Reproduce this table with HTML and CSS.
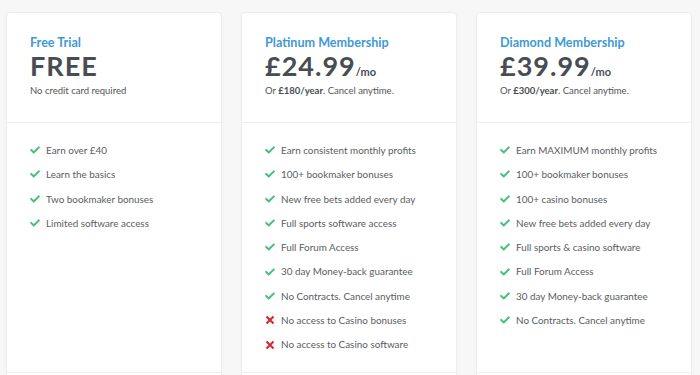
FILE: index.html
```html
<!DOCTYPE html>
<html lang="en">
<head>
  <meta charset="UTF-8">
  <meta name="viewport" content="width=device-width, initial-scale=1.0">
  <title>Membership Plans</title>
  <link rel="stylesheet" href="styles.css">
</head>
<body>
  <div class="pricing">
    <div class="plan-card">
      <div class="plan-header">
        <div class="plan-name">Free Trial</div>
        <div class="plan-price">FREE</div>
        <div class="plan-note">No credit card required</div>
      </div>
      <ul class="plan-features">
        <li><svg class="icon yes" viewBox="0 0 512 512"><path d="M173.9 439.4l-166.4-166.4c-10-10-10-26.2 0-36.2l36.2-36.2c10-10 26.2-10 36.2 0L192 312.7 432.1 72.6c10-10 26.2-10 36.2 0l36.2 36.2c10 10 10 26.2 0 36.2l-294.4 294.4c-10 10-26.2 10-36.2 0z"/></svg>Earn over £40</li>
        <li><svg class="icon yes" viewBox="0 0 512 512"><path d="M173.9 439.4l-166.4-166.4c-10-10-10-26.2 0-36.2l36.2-36.2c10-10 26.2-10 36.2 0L192 312.7 432.1 72.6c10-10 26.2-10 36.2 0l36.2 36.2c10 10 10 26.2 0 36.2l-294.4 294.4c-10 10-26.2 10-36.2 0z"/></svg>Learn the basics</li>
        <li><svg class="icon yes" viewBox="0 0 512 512"><path d="M173.9 439.4l-166.4-166.4c-10-10-10-26.2 0-36.2l36.2-36.2c10-10 26.2-10 36.2 0L192 312.7 432.1 72.6c10-10 26.2-10 36.2 0l36.2 36.2c10 10 10 26.2 0 36.2l-294.4 294.4c-10 10-26.2 10-36.2 0z"/></svg>Two bookmaker bonuses</li>
        <li><svg class="icon yes" viewBox="0 0 512 512"><path d="M173.9 439.4l-166.4-166.4c-10-10-10-26.2 0-36.2l36.2-36.2c10-10 26.2-10 36.2 0L192 312.7 432.1 72.6c10-10 26.2-10 36.2 0l36.2 36.2c10 10 10 26.2 0 36.2l-294.4 294.4c-10 10-26.2 10-36.2 0z"/></svg>Limited software access</li>
      </ul>
      <div class="plan-footer"></div>
    </div>

    <div class="plan-card">
      <div class="plan-header">
        <div class="plan-name">Platinum Membership</div>
        <div class="plan-price">£24.99<span class="per">/mo</span></div>
        <div class="plan-note">Or <strong>£180/year</strong>. Cancel anytime.</div>
      </div>
      <ul class="plan-features">
        <li><svg class="icon yes" viewBox="0 0 512 512"><path d="M173.9 439.4l-166.4-166.4c-10-10-10-26.2 0-36.2l36.2-36.2c10-10 26.2-10 36.2 0L192 312.7 432.1 72.6c10-10 26.2-10 36.2 0l36.2 36.2c10 10 10 26.2 0 36.2l-294.4 294.4c-10 10-26.2 10-36.2 0z"/></svg>Earn consistent monthly profits</li>
        <li><svg class="icon yes" viewBox="0 0 512 512"><path d="M173.9 439.4l-166.4-166.4c-10-10-10-26.2 0-36.2l36.2-36.2c10-10 26.2-10 36.2 0L192 312.7 432.1 72.6c10-10 26.2-10 36.2 0l36.2 36.2c10 10 10 26.2 0 36.2l-294.4 294.4c-10 10-26.2 10-36.2 0z"/></svg>100+ bookmaker bonuses</li>
        <li><svg class="icon yes" viewBox="0 0 512 512"><path d="M173.9 439.4l-166.4-166.4c-10-10-10-26.2 0-36.2l36.2-36.2c10-10 26.2-10 36.2 0L192 312.7 432.1 72.6c10-10 26.2-10 36.2 0l36.2 36.2c10 10 10 26.2 0 36.2l-294.4 294.4c-10 10-26.2 10-36.2 0z"/></svg>New free bets added every day</li>
        <li><svg class="icon yes" viewBox="0 0 512 512"><path d="M173.9 439.4l-166.4-166.4c-10-10-10-26.2 0-36.2l36.2-36.2c10-10 26.2-10 36.2 0L192 312.7 432.1 72.6c10-10 26.2-10 36.2 0l36.2 36.2c10 10 10 26.2 0 36.2l-294.4 294.4c-10 10-26.2 10-36.2 0z"/></svg>Full sports software access</li>
        <li><svg class="icon yes" viewBox="0 0 512 512"><path d="M173.9 439.4l-166.4-166.4c-10-10-10-26.2 0-36.2l36.2-36.2c10-10 26.2-10 36.2 0L192 312.7 432.1 72.6c10-10 26.2-10 36.2 0l36.2 36.2c10 10 10 26.2 0 36.2l-294.4 294.4c-10 10-26.2 10-36.2 0z"/></svg>Full Forum Access</li>
        <li><svg class="icon yes" viewBox="0 0 512 512"><path d="M173.9 439.4l-166.4-166.4c-10-10-10-26.2 0-36.2l36.2-36.2c10-10 26.2-10 36.2 0L192 312.7 432.1 72.6c10-10 26.2-10 36.2 0l36.2 36.2c10 10 10 26.2 0 36.2l-294.4 294.4c-10 10-26.2 10-36.2 0z"/></svg>30 day Money-back guarantee</li>
        <li><svg class="icon yes" viewBox="0 0 512 512"><path d="M173.9 439.4l-166.4-166.4c-10-10-10-26.2 0-36.2l36.2-36.2c10-10 26.2-10 36.2 0L192 312.7 432.1 72.6c10-10 26.2-10 36.2 0l36.2 36.2c10 10 10 26.2 0 36.2l-294.4 294.4c-10 10-26.2 10-36.2 0z"/></svg>No Contracts. Cancel anytime</li>
        <li><svg class="icon no" viewBox="0 0 10 10"><path d="M1.5 1.5l7 7M8.5 1.5l-7 7"/></svg>No access to Casino bonuses</li>
        <li><svg class="icon no" viewBox="0 0 10 10"><path d="M1.5 1.5l7 7M8.5 1.5l-7 7"/></svg>No access to Casino software</li>
      </ul>
      <div class="plan-footer"></div>
    </div>

    <div class="plan-card">
      <div class="plan-header">
        <div class="plan-name">Diamond Membership</div>
        <div class="plan-price">£39.99<span class="per">/mo</span></div>
        <div class="plan-note">Or <strong>£300/year</strong>. Cancel anytime.</div>
      </div>
      <ul class="plan-features">
        <li><svg class="icon yes" viewBox="0 0 512 512"><path d="M173.9 439.4l-166.4-166.4c-10-10-10-26.2 0-36.2l36.2-36.2c10-10 26.2-10 36.2 0L192 312.7 432.1 72.6c10-10 26.2-10 36.2 0l36.2 36.2c10 10 10 26.2 0 36.2l-294.4 294.4c-10 10-26.2 10-36.2 0z"/></svg>Earn MAXIMUM monthly profits</li>
        <li><svg class="icon yes" viewBox="0 0 512 512"><path d="M173.9 439.4l-166.4-166.4c-10-10-10-26.2 0-36.2l36.2-36.2c10-10 26.2-10 36.2 0L192 312.7 432.1 72.6c10-10 26.2-10 36.2 0l36.2 36.2c10 10 10 26.2 0 36.2l-294.4 294.4c-10 10-26.2 10-36.2 0z"/></svg>100+ bookmaker bonuses</li>
        <li><svg class="icon yes" viewBox="0 0 512 512"><path d="M173.9 439.4l-166.4-166.4c-10-10-10-26.2 0-36.2l36.2-36.2c10-10 26.2-10 36.2 0L192 312.7 432.1 72.6c10-10 26.2-10 36.2 0l36.2 36.2c10 10 10 26.2 0 36.2l-294.4 294.4c-10 10-26.2 10-36.2 0z"/></svg>100+ casino bonuses</li>
        <li><svg class="icon yes" viewBox="0 0 512 512"><path d="M173.9 439.4l-166.4-166.4c-10-10-10-26.2 0-36.2l36.2-36.2c10-10 26.2-10 36.2 0L192 312.7 432.1 72.6c10-10 26.2-10 36.2 0l36.2 36.2c10 10 10 26.2 0 36.2l-294.4 294.4c-10 10-26.2 10-36.2 0z"/></svg>New free bets added every day</li>
        <li><svg class="icon yes" viewBox="0 0 512 512"><path d="M173.9 439.4l-166.4-166.4c-10-10-10-26.2 0-36.2l36.2-36.2c10-10 26.2-10 36.2 0L192 312.7 432.1 72.6c10-10 26.2-10 36.2 0l36.2 36.2c10 10 10 26.2 0 36.2l-294.4 294.4c-10 10-26.2 10-36.2 0z"/></svg>Full sports &amp; casino software</li>
        <li><svg class="icon yes" viewBox="0 0 512 512"><path d="M173.9 439.4l-166.4-166.4c-10-10-10-26.2 0-36.2l36.2-36.2c10-10 26.2-10 36.2 0L192 312.7 432.1 72.6c10-10 26.2-10 36.2 0l36.2 36.2c10 10 10 26.2 0 36.2l-294.4 294.4c-10 10-26.2 10-36.2 0z"/></svg>Full Forum Access</li>
        <li><svg class="icon yes" viewBox="0 0 512 512"><path d="M173.9 439.4l-166.4-166.4c-10-10-10-26.2 0-36.2l36.2-36.2c10-10 26.2-10 36.2 0L192 312.7 432.1 72.6c10-10 26.2-10 36.2 0l36.2 36.2c10 10 10 26.2 0 36.2l-294.4 294.4c-10 10-26.2 10-36.2 0z"/></svg>30 day Money-back guarantee</li>
        <li><svg class="icon yes" viewBox="0 0 512 512"><path d="M173.9 439.4l-166.4-166.4c-10-10-10-26.2 0-36.2l36.2-36.2c10-10 26.2-10 36.2 0L192 312.7 432.1 72.6c10-10 26.2-10 36.2 0l36.2 36.2c10 10 10 26.2 0 36.2l-294.4 294.4c-10 10-26.2 10-36.2 0z"/></svg>No Contracts. Cancel anytime</li>
      </ul>
      <div class="plan-footer"></div>
    </div>
  </div>
</body>
</html>
```

FILE: styles.css
```css
* {
  margin: 0;
  padding: 0;
  box-sizing: border-box;
}

body {
  font-family: Lato, "Open Sans", sans-serif;
  background: #f7f7f7;
  color: #555;
  overflow: hidden;
}

.pricing {
  display: grid;
  grid-template-columns: repeat(3, 216px);
  gap: 19px;
  padding: 12px 6px 0;
}

.plan-card {
  background: #fff;
  border: 1px solid #ededed;
  border-radius: 4px;
  box-shadow: 0 1px 3px rgba(0,0,0,0.03);
}

.plan-header {
  height: 110px;
  padding: 21px 23px 0;
  border-bottom: 1px solid #eeeeee;
}

.plan-name {
  font-size: 12.6px;
  font-weight: 700;
  color: #3d9ad6;
  line-height: 18px;
}

.plan-price {
  font-size: 27px;
  font-weight: 700;
  color: #484d53;
  line-height: 28px;
  letter-spacing: 1px;
}

.plan-price .per {
  font-size: 11px;
  font-weight: 700;
  letter-spacing: 0;
  line-height: 0;
}

.plan-note {
  font-size: 9.5px;
  color: #555;
  margin-top: 5px;
}

.plan-note strong {
  font-weight: 700;
  color: #484d53;
}

.plan-features {
  list-style: none;
  height: 250px;
  padding: 15px 23px 0;
  border-bottom: 1px solid #eeeeee;
}

.plan-features li {
  display: flex;
  align-items: center;
  gap: 6px;
  font-size: 9.9px;
  line-height: 24.3px;
  color: #5a5d60;
  white-space: nowrap;
}

.icon {
  width: 10px;
  height: 10px;
  flex-shrink: 0;
}

.icon.yes {
  fill: #46bf7b;
}

.icon.no {
  fill: none;
  stroke: #d8232e;
  stroke-width: 2;
}

.plan-footer {
  height: 60px;
}
```
